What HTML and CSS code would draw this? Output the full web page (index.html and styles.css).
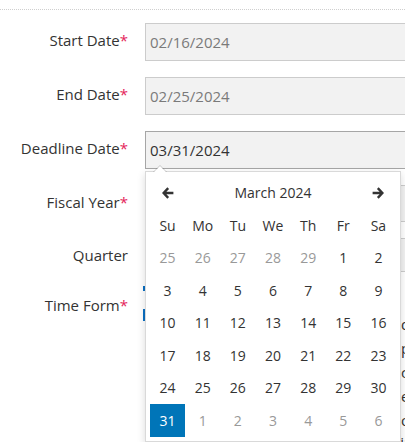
FILE: index.html
```html
<!DOCTYPE html>
<html>
<head>
<meta charset="utf-8">
<link rel="stylesheet" href="styles.css">
</head>
<body>
<div class="topline"></div>
<div class="form">
  <div class="row">
    <div class="label">Start Date<span class="req">*</span></div>
    <div class="field"><div class="input disabled">02/16/2024</div></div>
  </div>
  <div class="row">
    <div class="label">End Date<span class="req">*</span></div>
    <div class="field"><div class="input disabled">02/25/2024</div></div>
  </div>
  <div class="row">
    <div class="label">Deadline Date<span class="req">*</span></div>
    <div class="field">
      <div class="input focused">03/31/2024</div>
      <div class="datepicker">
        <div class="dp-head">
          <span class="nav"><svg width="12" height="12" viewBox="0 0 12 12"><path d="M6.2 1.2 1.6 6l4.6 4.8M2 6h9.4" fill="none" stroke="#333" stroke-width="2.4"/></svg></span>
          <span class="title">March 2024</span>
          <span class="nav"><svg width="12" height="12" viewBox="0 0 12 12"><path d="M5.8 1.2 10.4 6l-4.6 4.8M10 6H0.6" fill="none" stroke="#333" stroke-width="2.4"/></svg></span>
        </div>
        <div class="grid">
          <span class="dow">Su</span><span class="dow">Mo</span><span class="dow">Tu</span><span class="dow">We</span><span class="dow">Th</span><span class="dow">Fr</span><span class="dow">Sa</span>
          <span class="day old">25</span><span class="day old">26</span><span class="day old">27</span><span class="day old">28</span><span class="day old">29</span><span class="day">1</span><span class="day">2</span>
          <span class="day">3</span><span class="day">4</span><span class="day">5</span><span class="day">6</span><span class="day">7</span><span class="day">8</span><span class="day">9</span>
          <span class="day">10</span><span class="day">11</span><span class="day">12</span><span class="day">13</span><span class="day">14</span><span class="day">15</span><span class="day">16</span>
          <span class="day">17</span><span class="day">18</span><span class="day">19</span><span class="day">20</span><span class="day">21</span><span class="day">22</span><span class="day">23</span>
          <span class="day">24</span><span class="day">25</span><span class="day">26</span><span class="day">27</span><span class="day">28</span><span class="day">29</span><span class="day">30</span>
          <span class="day active">31</span><span class="day old">1</span><span class="day old">2</span><span class="day old">3</span><span class="day old">4</span><span class="day old">5</span><span class="day old">6</span>
        </div>
      </div>
    </div>
  </div>
  <div class="row">
    <div class="label">Fiscal Year<span class="req">*</span></div>
    <div class="field"><div class="input select"></div></div>
  </div>
  <div class="row">
    <div class="label">Quarter</div>
    <div class="field"><div class="input select short"></div></div>
  </div>
  <div class="row">
    <div class="label">Time Form<span class="req">*</span></div>
    <div class="field">
      <div class="mark m1"></div>
      <div class="mark m2"></div>
      <div class="table">
        <div class="opt">d</div>
        <div class="opt">p</div>
        <div class="opt">c</div>
        <div class="opt">e</div>
        <div class="opt">o</div>
        <div class="thead"><span class="bar">|</span><span>Date</span><span>Due</span><span>Group</span><span>Related</span><span>Time</span></div>
      </div>
    </div>
  </div>
</div>
</body>
</html>
```

FILE: styles.css
```css
html, body {
  margin: 0;
  padding: 0;
  background: #fff;
  overflow: hidden;
  font-family: "Open Sans", "Noto Sans", sans-serif;
  color: #333;
}

.topline {
  margin-top: 9px;
  border-top: 1px dotted #cfcfcf;
}

.form {
  padding-top: 13px;
}

.row {
  display: flex;
  margin-bottom: 16px;
}

.label {
  width: 128px;
  flex-shrink: 0;
  text-align: right;
  padding-top: 7px;
  font-size: 15px;
  line-height: 20px;
  color: #333;
}

.req {
  color: #e4245a;
}

.field {
  position: relative;
  margin-left: 17px;
  width: 320px;
  flex-shrink: 0;
}

.input {
  box-sizing: border-box;
  height: 38px;
  border: 1px solid #cccccc;
  background: #f2f2f2;
  padding: 0 4px;
  font-size: 15px;
  line-height: 36px;
  color: #333;
}

.input.disabled {
  color: #7a7a7a;
}

.input.focused {
  border-color: #a6a6a6;
}

.input.select {
  height: 37px;
}

.input.short {
  height: 34px;
}

.mark {
  width: 2px;
  margin-left: -2px;
  background: #0a6fc2;
}

.m1 {
  height: 5px;
  margin-top: -2px;
}

.m2 {
  height: 12px;
  margin-top: 18px;
}

.table {
  border-left: 1px dashed #555;
  margin-top: -9px;
  font-size: 15px;
}

.opt {
  height: 24px;
  line-height: 24px;
  padding-left: 255px;
  white-space: nowrap;
}

.thead {
  display: flex;
  gap: 14px;
  padding-left: 11px;
  line-height: 20px;
  margin-top: 0;
  white-space: nowrap;
}

.bar {
  margin-right: -2px;
}

/* datepicker dropdown */
.datepicker {
  position: absolute;
  top: calc(100% + 2px);
  left: 0;
  width: 256px;
  box-sizing: border-box;
  padding: 4px;
  background: #fff;
  border: 1px solid rgba(0, 0, 0, 0.15);
  box-shadow: 0 3px 8px rgba(0, 0, 0, 0.15);
  z-index: 10;
  font-size: 14px;
  color: #333;
}

.datepicker::before {
  content: "";
  position: absolute;
  top: -7px;
  left: 7px;
  border-left: 7px solid transparent;
  border-right: 7px solid transparent;
  border-bottom: 7px solid rgba(0, 0, 0, 0.18);
}

.datepicker::after {
  content: "";
  position: absolute;
  top: -6px;
  left: 8px;
  border-left: 6px solid transparent;
  border-right: 6px solid transparent;
  border-bottom: 6px solid #fff;
}

.dp-head {
  display: grid;
  grid-template-columns: 1fr 5fr 1fr;
  height: 33px;
  align-items: center;
  text-align: center;
}

.nav {
  display: flex;
  justify-content: center;
  align-items: center;
}

.title {
  font-size: 14px;
}

.grid {
  display: grid;
  grid-template-columns: repeat(7, 1fr);
  grid-auto-rows: 32.5px;
}

.dow, .day {
  display: flex;
  align-items: center;
  justify-content: center;
  font-size: 14px;
}

.day.old {
  color: #999;
}

.day.active {
  background: #0075b8;
  color: #fff;
}
```
